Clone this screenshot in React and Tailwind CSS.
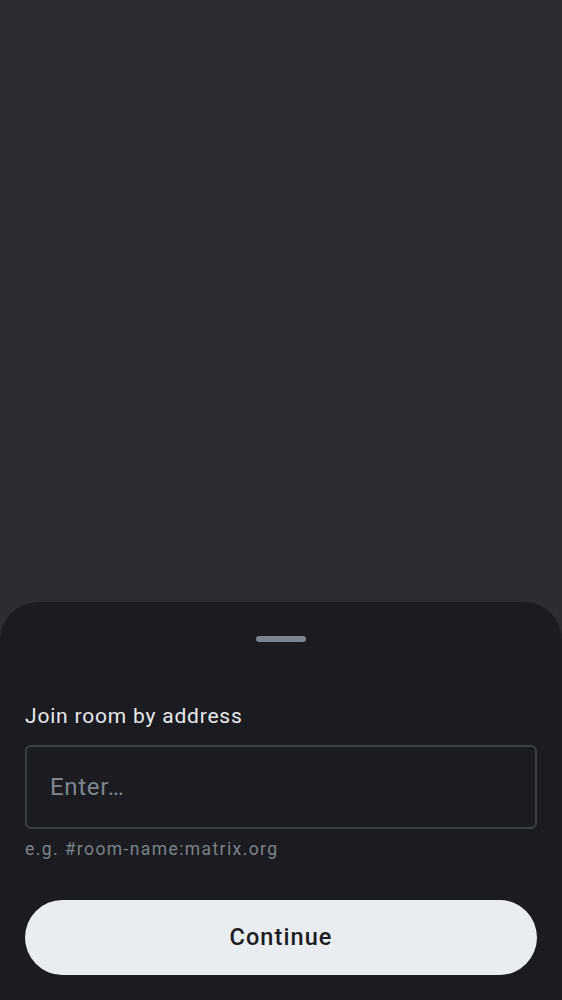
export default function App() {
  return (
    <div
      className="flex h-[1000px] w-full flex-col bg-[#2c2d30]"
      style={{ fontFamily: "Roboto, 'Noto Sans', sans-serif" }}
    >
      <div className="flex-1" />
      {/* bottom sheet */}
      <div className="rounded-t-[38px] bg-[#1a1c21] px-[25px] pt-[34px] pb-[25px]">
        <div className="mx-auto h-[6px] w-[50px] rounded-full bg-[#7d8590]" />
        <label className="mt-[60px] block text-[21px] leading-[28px] tracking-[0.8px] text-[#e8eaee]">
          Join room by address
        </label>
        <div className="mt-[15px] flex h-[84px] items-center rounded-[6px] border-2 border-[#3b3f46] px-[23px]">
          <input
            className="w-full bg-transparent text-[24px] tracking-[0.7px] text-[#e8eaee] placeholder:text-[#7f868f] outline-none"
            placeholder="Enter…"
          />
        </div>
        <p className="mt-[8px] text-[17.5px] leading-[24px] tracking-[1.4px] text-[#7d838b]">
          e.g. #room-name:matrix.org
        </p>
        <button className="mt-[39px] flex h-[75px] w-full items-center justify-center rounded-full bg-[#e9ecf0] text-[23.5px] font-medium tracking-[1.1px] text-[#1b1d22]">
          Continue
        </button>
      </div>
    </div>
  );
}
